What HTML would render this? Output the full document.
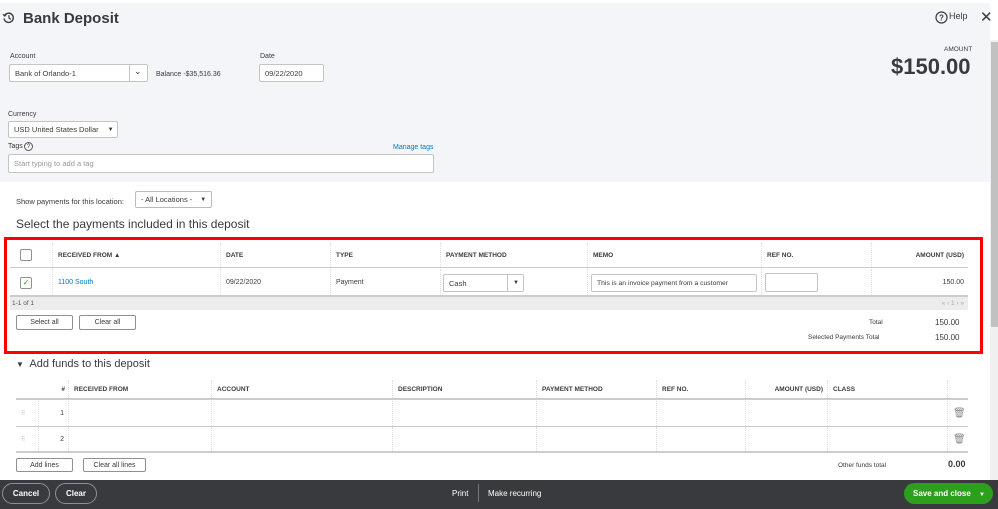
<!DOCTYPE html>
<html><head><style>
*{box-sizing:border-box;margin:0;padding:0}
body{width:998px;height:509px;overflow:hidden;font-family:"Liberation Sans",Arial,sans-serif;color:#393a3d;background:#fff;position:relative;font-size:8px}
.a{position:absolute}
.hdr{left:0;top:3px;width:990px;height:179px;background:#f4f5f8}
.inp{position:absolute;background:#fff;border:1px solid #c4c4c4;border-radius:2px;font-size:7.5px;padding-left:5px;display:flex;align-items:center;color:#393a3d}
.lbl{font-size:7px;color:#393a3d}
.th{position:absolute;font-size:6.5px;font-weight:bold;color:#393a3d;top:0;height:100%;display:flex;align-items:center;padding-left:5px;border-left:1px dotted #ddd}
.td{position:absolute;font-size:7px;top:0;height:100%;display:flex;align-items:center;padding-left:5px;border-left:1px dotted #ddd}
.btn{position:absolute;border:1px solid #8d9096;border-radius:2px;background:#fff;font-size:7px;display:flex;align-items:center;justify-content:center;color:#393a3d}
</style></head><body>
<div class="a hdr"></div>
<div class="a" style="left:0;top:0;width:998px;height:3px;background:#fff"></div>
<svg class="a" style="left:2px;top:11px" width="13" height="13" viewBox="0 0 14 14"><path d="M3 4.5A5 5 0 1 1 2.2 8" fill="none" stroke="#393a3d" stroke-width="1.5"/><path d="M1 3.5L3 5.5L5 3" fill="none" stroke="#393a3d" stroke-width="1.3"/><path d="M7.5 4.5V7.5L9.5 9" fill="none" stroke="#393a3d" stroke-width="1.3"/></svg>
<div class="a" style="left:23px;top:10px;font-size:15px;font-weight:bold;color:#393a3d">Bank Deposit</div>
<svg class="a" style="left:935px;top:11px" width="13" height="13" viewBox="0 0 13 13"><circle cx="6.5" cy="6.5" r="5.5" fill="none" stroke="#393a3d" stroke-width="1.2"/><text x="6.5" y="9.5" font-size="8" font-weight="bold" text-anchor="middle" fill="#393a3d" font-family="Liberation Sans">?</text></svg>
<div class="a" style="left:949px;top:11px;font-size:9px">Help</div>
<div class="a" style="left:980px;top:8px;font-size:15px;color:#393a3d">✕</div>
<div class="a" style="left:944px;top:46px;font-size:6.5px">AMOUNT</div>
<div class="a" style="left:891px;top:54px;font-size:22px;font-weight:bold;color:#393a3d">$150.00</div>
<div class="a" style="left:990px;top:40px;width:8px;height:469px;background:#f0f0f0"></div>
<div class="a" style="left:991px;top:42px;width:7px;height:285px;background:#c1c1c1"></div>
<div class="a lbl" style="left:10px;top:53px">Account</div>
<div class="inp" style="left:9px;top:64px;width:139px;height:18px">Bank of Orlando-1</div>
<div class="a" style="left:129px;top:65px;width:1px;height:16px;background:#c4c4c4"></div>
<div class="a" style="left:134px;top:66px;font-size:9px">⌄</div>
<div class="a" style="left:156px;top:71px;font-size:7px">Balance -$35,516.36</div>
<div class="a lbl" style="left:260px;top:53px">Date</div>
<div class="inp" style="left:259px;top:64px;width:65px;height:18px">09/22/2020</div>
<div class="a lbl" style="left:8px;top:111px">Currency</div>
<div class="inp" style="left:8px;top:121px;width:110px;height:17px">USD United States Dollar <span style="margin-left:9px;font-size:6px">▼</span></div>
<div class="a lbl" style="left:8px;top:143px">Tags</div>
<div class="a" style="left:24px;top:142px;width:9px;height:9px;border:1px solid #555;border-radius:50%;font-size:6px;text-align:center;line-height:8px">?</div>
<div class="a" style="left:393px;top:144px;font-size:7px;color:#0077c5">Manage tags</div>
<div class="inp" style="left:8px;top:154px;width:426px;height:19px;color:#999">Start typing to add a tag</div>
<div class="a" style="left:16px;top:197px;font-size:7.5px">Show payments for this location:</div>
<div class="inp" style="left:135px;top:191px;width:77px;height:17px;border-color:#bbb">- All Locations - <span style="margin-left:8px;font-size:6px">▼</span></div>
<div class="a" style="left:16px;top:217px;font-size:12px">Select the payments included in this deposit</div>
<div class="a" style="left:4px;top:237px;width:979px;height:117px;border:3px solid #f00"></div>
<div class="a" style="left:10px;top:243px;width:958px;height:25px;border-bottom:1px solid #ccc">
 <div class="a" style="left:10px;top:6px;width:12px;height:12px;border:1px solid #8d9096;border-radius:2px;background:#fff"></div>
 <div class="th" style="left:42px;border:none;border-left:1px dotted #ddd">RECEIVED FROM ▲</div>
 <div class="th" style="left:210px">DATE</div>
 <div class="th" style="left:320px">TYPE</div>
 <div class="th" style="left:430px">PAYMENT METHOD</div>
 <div class="th" style="left:577px">MEMO</div>
 <div class="th" style="left:751px">REF NO.</div>
 <div class="th" style="left:861px;width:97px;justify-content:flex-end;padding-right:4px">AMOUNT (USD)</div>
</div>
<div class="a" style="left:10px;top:269px;width:958px;height:28px;border-bottom:2px solid #ccc">
 <div class="a" style="left:10px;top:8px;width:12px;height:12px;border:1px solid #8d9096;border-radius:2px;background:#fff;font-size:8px;color:#2ca01c;text-align:center;line-height:10px">✓</div>
 <div class="td" style="left:42px;color:#0077c5">1100 South</div>
 <div class="td" style="left:210px">09/22/2020</div>
 <div class="td" style="left:320px">Payment</div>
 <div class="td" style="left:430px;width:147px"></div>
 <div class="inp" style="left:433px;top:5px;width:81px;height:18px">Cash</div>
 <div class="a" style="left:497px;top:6px;width:1px;height:16px;background:#c4c4c4"></div>
 <div class="a" style="left:503px;top:11px;font-size:6px">▼</div>
 <div class="td" style="left:577px;width:174px"></div>
 <div class="inp" style="left:581px;top:5px;width:166px;height:18px;font-size:6.8px">This is an invoice payment from a customer</div>
 <div class="td" style="left:751px;width:110px"></div>
 <div class="inp" style="left:755px;top:4px;width:53px;height:19px"></div>
 <div class="td" style="left:861px;width:97px;justify-content:flex-end;padding-right:4px">150.00</div>
</div>
<div class="a" style="left:10px;top:297px;width:958px;height:13px;background:#ececec;font-size:6.5px;padding-left:2px;line-height:13px;color:#555">1-1 of 1<span style="position:absolute;right:4px;color:#aaa">« ‹ 1 › »</span></div>
<div class="btn" style="left:16px;top:315px;width:57px;height:15px">Select all</div>
<div class="btn" style="left:79px;top:315px;width:57px;height:15px">Clear all</div>
<div class="a" style="left:869px;top:319px;font-size:6.5px">Total</div>
<div class="a" style="left:935px;top:318px;font-size:8px">150.00</div>
<div class="a" style="left:808px;top:334px;font-size:6.5px">Selected Payments Total</div>
<div class="a" style="left:935px;top:333px;font-size:8px">150.00</div>
<div class="a" style="left:16px;top:358px;font-size:11px"><span style="font-size:8px">▼</span>&nbsp; Add funds to this deposit</div>
<div class="a" style="left:16px;top:380px;width:952px;height:20px;border-bottom:2px solid #ccc">
 <div class="th" style="left:22px;border:none;width:30px;justify-content:flex-end;padding-right:3px">#</div>
 <div class="th" style="left:52px">RECEIVED FROM</div>
 <div class="th" style="left:195px">ACCOUNT</div>
 <div class="th" style="left:376px">DESCRIPTION</div>
 <div class="th" style="left:520px">PAYMENT METHOD</div>
 <div class="th" style="left:640px">REF NO.</div>
 <div class="th" style="left:729px;width:82px;justify-content:flex-end;padding-right:4px">AMOUNT (USD)</div>
 <div class="th" style="left:811px">CLASS</div>
 <div class="th" style="left:931px"></div>
</div>
<div class="a" style="left:16px;top:401px;width:952px;height:26px;border-bottom:1px solid #ccc">
 <div class="td" style="left:0;border:none;color:#bbb;font-size:6px">⠿</div>
 <div class="td" style="left:22px;width:30px;justify-content:flex-end;padding-right:4px">1</div>
 <div class="td" style="left:52px"></div><div class="td" style="left:195px"></div><div class="td" style="left:376px"></div><div class="td" style="left:520px"></div><div class="td" style="left:640px"></div><div class="td" style="left:729px"></div><div class="td" style="left:811px"></div>
 <div class="td" style="left:931px;width:21px;color:#888;font-size:10px">🗑</div>
</div>
<div class="a" style="left:16px;top:427px;width:952px;height:26px;border-bottom:2px solid #ccc">
 <div class="td" style="left:0;border:none;color:#bbb;font-size:6px">⠿</div>
 <div class="td" style="left:22px;width:30px;justify-content:flex-end;padding-right:4px">2</div>
 <div class="td" style="left:52px"></div><div class="td" style="left:195px"></div><div class="td" style="left:376px"></div><div class="td" style="left:520px"></div><div class="td" style="left:640px"></div><div class="td" style="left:729px"></div><div class="td" style="left:811px"></div>
 <div class="td" style="left:931px;width:21px;color:#888;font-size:10px">🗑</div>
</div>
<div class="btn" style="left:16px;top:458px;width:57px;height:14px">Add lines</div>
<div class="btn" style="left:83px;top:458px;width:63px;height:14px">Clear all lines</div>
<div class="a" style="left:838px;top:462px;font-size:6.5px">Other funds total</div>
<div class="a" style="left:948px;top:459px;font-size:9px;font-weight:bold">0.00</div>
<div class="a" style="left:0;top:480px;width:998px;height:29px;background:#393a3d"></div>
<div class="a" style="left:2px;top:483px;width:48px;height:21px;border:1px solid #8d9096;border-radius:11px;color:#fff;font-size:8px;font-weight:bold;text-align:center;line-height:19px">Cancel</div>
<div class="a" style="left:55px;top:483px;width:42px;height:21px;border:1px solid #8d9096;border-radius:11px;color:#fff;font-size:8px;font-weight:bold;text-align:center;line-height:19px">Clear</div>
<div class="a" style="left:452px;top:489px;color:#fff;font-size:8px">Print</div>
<div class="a" style="left:478px;top:484px;width:1px;height:18px;background:#777"></div>
<div class="a" style="left:488px;top:489px;color:#fff;font-size:8px">Make recurring</div>
<div class="a" style="left:904px;top:483px;width:89px;height:21px;background:#2ca01c;border-radius:11px;color:#fff;font-size:8px;font-weight:bold;line-height:21px;padding-left:9px">Save and close <span style="margin-left:6px;font-size:6px">▼</span></div>
</body></html>
